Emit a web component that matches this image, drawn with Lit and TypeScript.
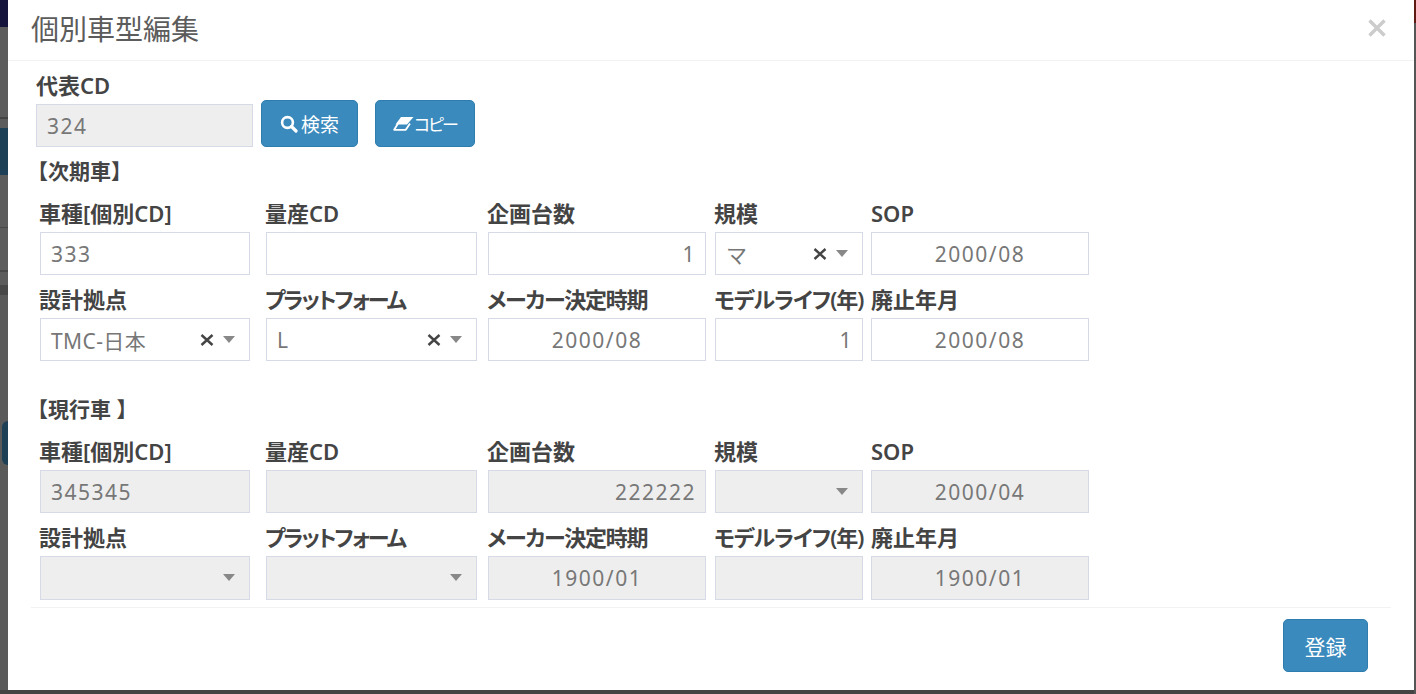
import { LitElement, html, css, svg } from 'lit';
import { customElement } from 'lit/decorators.js';

const arrow = html`<span class="arrow"></span>`;

const searchIcon = svg`<svg class="ico" width="18" height="18" viewBox="0 0 18 18">
  <circle cx="7.5" cy="7.5" r="5.4" fill="none" stroke="#fff" stroke-width="2.6"/>
  <path d="M11.5 11.5 16 16" stroke="#fff" stroke-width="3.2" stroke-linecap="round"/>
</svg>`;

const eraserIcon = svg`<svg class="ico" width="21" height="15" viewBox="0 0 21 15">
  <path d="M8 1H20.5L14 8.5H2.5Z" fill="#fff"/>
  <path d="M5 7.5 1.2 13.8H12.8L17 7.5" fill="none" stroke="#fff" stroke-width="1.8" stroke-linejoin="round"/>
</svg>`;

type Field = {
  label: string;
  value?: string;
  kind?: 'text' | 'num' | 'date' | 'select';
  clear?: boolean;
  tight?: string;
};

const next: Field[] = [
  { label: '車種[個別CD]', value: '333' },
  { label: '量産CD' },
  { label: '企画台数', value: '1', kind: 'num' },
  { label: '規模', value: 'マ', kind: 'select', clear: true },
  { label: 'SOP', value: '2000/08', kind: 'date' },
  { label: '設計拠点', value: 'TMC-日本', kind: 'select', clear: true },
  { label: 'プラットフォーム', value: 'L', kind: 'select', clear: true, tight: 'tight-l' },
  { label: 'メーカー決定時期', value: '2000/08', kind: 'date', tight: 'tight-m' },
  { label: 'モデルライフ(年)', value: '1', kind: 'num', tight: 'tight-s' },
  { label: '廃止年月', value: '2000/08', kind: 'date' },
];

const current: Field[] = [
  { label: '車種[個別CD]', value: '345345' },
  { label: '量産CD' },
  { label: '企画台数', value: '222222', kind: 'num' },
  { label: '規模', kind: 'select' },
  { label: 'SOP', value: '2000/04', kind: 'date' },
  { label: '設計拠点', kind: 'select' },
  { label: 'プラットフォーム', kind: 'select', tight: 'tight-l' },
  { label: 'メーカー決定時期', value: '1900/01', kind: 'date', tight: 'tight-m' },
  { label: 'モデルライフ(年)', kind: 'num', tight: 'tight-s' },
  { label: '廃止年月', value: '1900/01', kind: 'date' },
];

@customElement('app-root')
export class AppRoot extends LitElement {
  static styles = css`
    * {
      box-sizing: border-box;
    }
    :host {
      display: flex;
      box-sizing: border-box;
      position: relative;
      height: 694px;
      width: 1416px;
      padding: 0 2px 4px 8px;
      overflow: hidden;
      font-family: "Noto Sans", "Noto Sans CJK JP", sans-serif;
      background:
        linear-gradient(#5e1a12 0 23px, #555 23px) right top / 2px 100% no-repeat,
        linear-gradient(
          #14143c 0 27px,
          #5c5c5c 27px 117px,
          #444 117px 119px,
          #5c5c5c 119px 128px,
          #1d4057 128px 175px,
          #5c5c5c 175px 227px,
          #484848 227px 228px,
          #5c5c5c 228px 270px,
          #484848 270px 272px,
          #5c5c5c 272px 285px,
          #484848 285px 295px,
          #5a5a5a 295px 690px,
          #444 690px
        );
    }
    /* button of the page behind the dialog, peeking out on the left */
    :host::before {
      content: '';
      position: absolute;
      left: 2px;
      top: 421px;
      width: 6px;
      height: 44px;
      border-radius: 6px 0 0 6px;
      background: #1d4057;
    }
    .modal {
      flex: 1;
      display: flex;
      flex-direction: column;
      background: #fff;
    }
    .head {
      flex: none;
      height: 61px;
      padding: 0 23px;
      display: flex;
      align-items: center;
      justify-content: space-between;
      border-bottom: 1px solid #f2f2f2;
    }
    .head h1 {
      margin: -5px 0 0;
      font-size: 28px;
      font-weight: 400;
      color: #5c5c5c;
    }
    .close {
      width: 18px;
      height: 18px;
      margin-right: 5px;
      margin-top: -5px;
      display: block;
    }
    .body {
      flex: 1;
      min-height: 0;
      padding: 10px 0 0 28px;
    }
    .label {
      font-size: 22px;
      line-height: 28px;
      font-weight: 600;
      color: #444;
      white-space: nowrap;
      font-feature-settings: 'palt';
      margin-left: -1px;
    }
    .tight-l {
      letter-spacing: -2px;
    }
    .tight-m {
      letter-spacing: -1.3px;
    }
    .tight-s {
      letter-spacing: -1px;
    }
    .rep {
      height: 89px;
    }
    .rep .label {
      margin-left: 0;
    }
    .rep .row {
      display: flex;
      align-items: flex-start;
      margin-top: 1px;
    }
    .rep .ctrl {
      width: 217px;
      margin-top: 4px;
    }
    .btn {
      display: inline-flex;
      align-items: center;
      justify-content: center;
      gap: 3px;
      height: 47px;
      border: 1px solid #2e7dae;
      border-radius: 5px;
      background: #3a8abd;
      color: #fff;
      font-family: inherit;
      font-size: 19px;
      font-feature-settings: 'palt';
      padding: 0;
    }
    .search {
      width: 97px;
      margin-left: 8px;
    }
    .copy {
      width: 100px;
      margin-left: 17px;
      gap: 0;
      font-size: 17px;
      letter-spacing: -2px;
    }
    .section {
      font-size: 21px;
      line-height: 26px;
      font-weight: 600;
      color: #444;
      margin-left: -9px;
    }
    .s1 {
      margin-top: -2px;
    }
    .s2 {
      margin-top: 24px;
    }
    .grid {
      display: grid;
      grid-template-columns: 226px 222px 227px 156px 218px;
      grid-auto-rows: 86px;
      margin-left: 4px;
      padding-top: 16px;
    }
    .s2 + .grid {
      grid-auto-rows: 85.5px;
    }
    .s2 + .grid .field:nth-child(n + 6) .ctrl {
      height: 44px;
    }
    .grid .label {
      line-height: 26px;
    }
    .field:nth-child(5n + 1) .ctrl {
      width: 210px;
    }
    .field:nth-child(5n + 2) .ctrl {
      width: 211px;
    }
    .field:nth-child(5n + 3) .ctrl {
      width: 218px;
    }
    .field:nth-child(5n + 4) .ctrl {
      width: 148px;
    }
    .field:nth-child(5n) .ctrl {
      width: 218px;
    }
    .field:nth-child(5n) .label {
      margin-left: 0;
    }
    .ctrl {
      display: block;
      height: 43px;
      margin-top: 6px;
      border: 1px solid #d5dae6;
      background: #fff;
      font-family: inherit;
      font-size: 21px;
      letter-spacing: 1.5px;
      color: #777;
      padding: 0 10px;
      outline: none;
      border-radius: 0;
    }
    .ctrl:disabled,
    .select.off {
      background: #eee;
      -webkit-text-fill-color: #777;
      opacity: 1;
    }
    .num {
      text-align: right;
      padding-right: 9px;
    }
    .date {
      text-align: center;
    }
    .select {
      display: flex;
      align-items: center;
      padding: 0 14px 0 10px;
    }
    .select .val {
      flex: 1;
      white-space: nowrap;
      letter-spacing: 0.4px;
    }
    .clear {
      width: 14px;
      height: 14px;
      margin-right: 9px;
      display: block;
    }
    .arrow {
      width: 0;
      height: 0;
      border-left: 6px solid transparent;
      border-right: 6px solid transparent;
      border-top: 7px solid #888;
    }
    .foot {
      flex: none;
      height: 83px;
      margin: 0 23px;
      border-top: 1px solid #f2f2f2;
      display: flex;
      justify-content: flex-end;
      align-items: flex-start;
      padding: 11px 23px 0 0;
    }
    .save {
      width: 85px;
      height: 53px;
      font-size: 21px;
    }
  `;

  private renderField(f: Field, off: boolean) {
    let ctrl;
    if (f.kind === 'select') {
      ctrl = html`<div class="ctrl select ${off ? 'off' : ''}">
        <span class="val">${f.value ?? ''}</span>
        ${f.clear
          ? svg`<svg class="clear" viewBox="0 0 14 14"><path d="M1.5 2 12.5 12M12.5 2 1.5 12" stroke="#444" stroke-width="2.4"/></svg>`
          : ''}
        ${arrow}
      </div>`;
    } else {
      ctrl = html`<input
        class="ctrl ${f.kind ?? ''}"
        .value=${f.value ?? ''}
        ?disabled=${off}
      />`;
    }
    return html`<div class="field">
      <div class="label ${f.tight ?? ''}">${f.label}</div>
      ${ctrl}
    </div>`;
  }

  render() {
    return html`<div class="modal">
      <div class="head">
        <h1>個別車型編集</h1>
        <svg class="close" viewBox="0 0 18 18">
          <path d="M1.5 1.5 16.5 16.5M16.5 1.5 1.5 16.5" stroke="#ccc" stroke-width="3.4" />
        </svg>
      </div>
      <div class="body">
        <div class="rep">
          <div class="label">代表CD</div>
          <div class="row">
            <input class="ctrl" value="324" disabled />
            <button class="btn search">${searchIcon}検索</button>
            <button class="btn copy">${eraserIcon}コピー</button>
          </div>
        </div>
        <div class="section s1">【次期車】</div>
        <div class="grid">${next.map((f) => this.renderField(f, false))}</div>
        <div class="section s2">【現行車 】</div>
        <div class="grid">${current.map((f) => this.renderField(f, true))}</div>
      </div>
      <div class="foot"><button class="btn save">登録</button></div>
    </div>`;
  }
}
